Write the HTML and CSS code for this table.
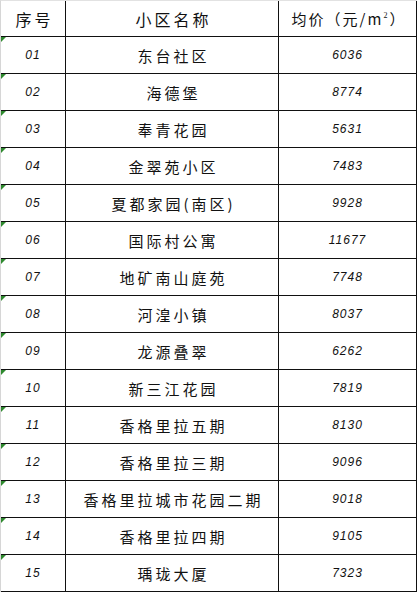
FILE: index.html
```html
<!DOCTYPE html>
<html lang="zh">
<head>
<meta charset="utf-8">
<link rel="stylesheet" href="styles.css">
</head>
<body>
<div class="sheet">
<table class="grid">
  <thead>
    <tr><th class="c1">序号</th><th class="c2">小区名称</th><th class="c3">均价（元/m<sup>2</sup>）</th></tr>
  </thead>
  <tbody>
    <tr><td class="num"><span class="mark"></span>01</td><td class="name">东台社区</td><td class="num">6036</td></tr>
    <tr><td class="num"><span class="mark"></span>02</td><td class="name">海德堡</td><td class="num">8774</td></tr>
    <tr><td class="num"><span class="mark"></span>03</td><td class="name">奉青花园</td><td class="num">5631</td></tr>
    <tr><td class="num"><span class="mark"></span>04</td><td class="name">金翠苑小区</td><td class="num">7483</td></tr>
    <tr><td class="num"><span class="mark"></span>05</td><td class="name">夏都家园(南区)</td><td class="num">9928</td></tr>
    <tr><td class="num"><span class="mark"></span>06</td><td class="name">国际村公寓</td><td class="num">11677</td></tr>
    <tr><td class="num"><span class="mark"></span>07</td><td class="name">地矿南山庭苑</td><td class="num">7748</td></tr>
    <tr><td class="num"><span class="mark"></span>08</td><td class="name">河湟小镇</td><td class="num">8037</td></tr>
    <tr><td class="num"><span class="mark"></span>09</td><td class="name">龙源叠翠</td><td class="num">6262</td></tr>
    <tr><td class="num"><span class="mark"></span>10</td><td class="name">新三江花园</td><td class="num">7819</td></tr>
    <tr><td class="num"><span class="mark"></span>11</td><td class="name">香格里拉五期</td><td class="num">8130</td></tr>
    <tr><td class="num"><span class="mark"></span>12</td><td class="name">香格里拉三期</td><td class="num">9096</td></tr>
    <tr><td class="num"><span class="mark"></span>13</td><td class="name">香格里拉城市花园二期</td><td class="num">9018</td></tr>
    <tr><td class="num"><span class="mark"></span>14</td><td class="name">香格里拉四期</td><td class="num">9105</td></tr>
    <tr><td class="num"><span class="mark"></span>15</td><td class="name">瑀珑大厦</td><td class="num">7323</td></tr>
  </tbody>
</table>
</div>
</body>
</html>
```
FILE: styles.css
```css
html, body {
  margin: 0;
  padding: 0;
  background: #ffffff;
}
body {
  width: 420px;
  height: 595px;
  overflow: hidden;
  font-family: "Noto Sans CJK SC", "Noto Sans", sans-serif;
  color: #111111;
}
.sheet {
  border-left: 1px solid #d6d6d6;
  border-top: 1px solid #e2e2e2;
  width: 416px;
}
.grid {
  border-collapse: collapse;
  table-layout: fixed;
  width: 416px;
}
.grid th, .grid td {
  height: 36px;
  padding: 0;
  text-align: center;
  vertical-align: middle;
  border-bottom: 1px solid #111;
  border-right: 1px solid #111;
  position: relative;
}
.grid th {
  height: 35px;
  font-weight: 400;
  font-size: 16px;
  letter-spacing: 3px;
  padding-left: 3px;
}
.c1 { width: 61px; }
.c2 { width: 209px; }
.grid th.c3 { letter-spacing: 2px; font-size: 15px; }
.c3 sup { font-size: 8px; vertical-align: 7px; font-family: "Liberation Serif", serif; }
.name {
  font-size: 15px;
  letter-spacing: 3px;
  padding-left: 3px !important;
}
.num {
  font-family: "Liberation Sans", sans-serif;
  font-style: italic;
  font-size: 12px;
  letter-spacing: 1px;
}
.mark {
  position: absolute;
  left: 0;
  top: 0;
  width: 0;
  height: 0;
  border-top: 5px solid #2f8a2f;
  border-right: 5px solid transparent;
}
```
